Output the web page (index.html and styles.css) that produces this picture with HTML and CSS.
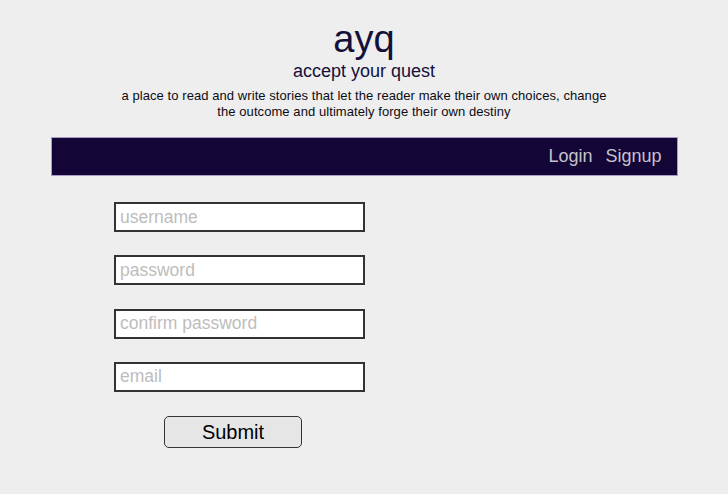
FILE: index.html
```html
<!DOCTYPE html>
<html lang="en">
<head>
<meta charset="utf-8">
<title>ayq - signup</title>
<link rel="stylesheet" href="styles.css">
</head>
<body>
<header class="site-header">
  <h1 class="logo">ayq</h1>
  <h2 class="tagline">accept your quest</h2>
  <p class="desc">a place to read and write stories that let the reader make their own choices, change the outcome and ultimately forge their own destiny</p>
</header>
<nav class="navbar">
  <a class="nav-link" href="#">Login</a>
  <a class="nav-link" href="#">Signup</a>
</nav>
<form class="signup-form">
  <input class="field" type="text" placeholder="username">
  <input class="field" type="password" placeholder="password">
  <input class="field" type="password" placeholder="confirm password">
  <input class="field" type="text" placeholder="email">
  <button class="submit" type="button">Submit</button>
</form>
</body>
</html>
```
FILE: styles.css
```css
html, body {
  margin: 0;
  padding: 0;
  background: #eeeeee;
  font-family: "Liberation Sans", Arial, sans-serif;
}
.site-header {
  text-align: center;
  padding-top: 19px;
  color: #14103a;
}
.logo {
  margin: 0;
  font-size: 38px;
  line-height: 40px;
  font-weight: normal;
}
.tagline {
  margin: 2px 0 0;
  font-size: 18px;
  line-height: 20px;
  font-weight: normal;
}
.desc {
  margin: 7px auto 0;
  width: 500px;
  font-size: 13px;
  line-height: 16px;
  letter-spacing: 0.07px;
  color: #0c0c14;
}
.navbar {
  box-sizing: border-box;
  width: 627px;
  height: 39px;
  margin: 17px auto 0;
  background: #130535;
  border: 1px solid #a79cc4;
  display: flex;
  justify-content: flex-end;
  align-items: center;
  gap: 13px;
  padding-right: 15px;
}
.nav-link {
  color: #c4c2cc;
  text-decoration: none;
  font-size: 18px;
}
.signup-form {
  display: flex;
  flex-direction: column;
  align-items: flex-start;
  gap: 23.3px;
  padding: 26px 0 0 114px;
}
.field {
  box-sizing: border-box;
  width: 251px;
  height: 30px;
  margin: 0;
  border: 2px solid #333;
  background: #fff;
  padding: 0 4px;
  font-family: "Liberation Sans", Arial, sans-serif;
  font-size: 17.5px;
  outline: none;
}
.field::placeholder {
  color: #bdbdbd;
}
.submit {
  box-sizing: border-box;
  margin: 1px 0 0 50px;
  width: 138px;
  height: 32px;
  border: 1px solid #333;
  border-radius: 5px;
  background: #e6e6e6;
  font-family: "Liberation Sans", Arial, sans-serif;
  font-size: 20px;
  color: #000;
  padding: 0;
}
```
